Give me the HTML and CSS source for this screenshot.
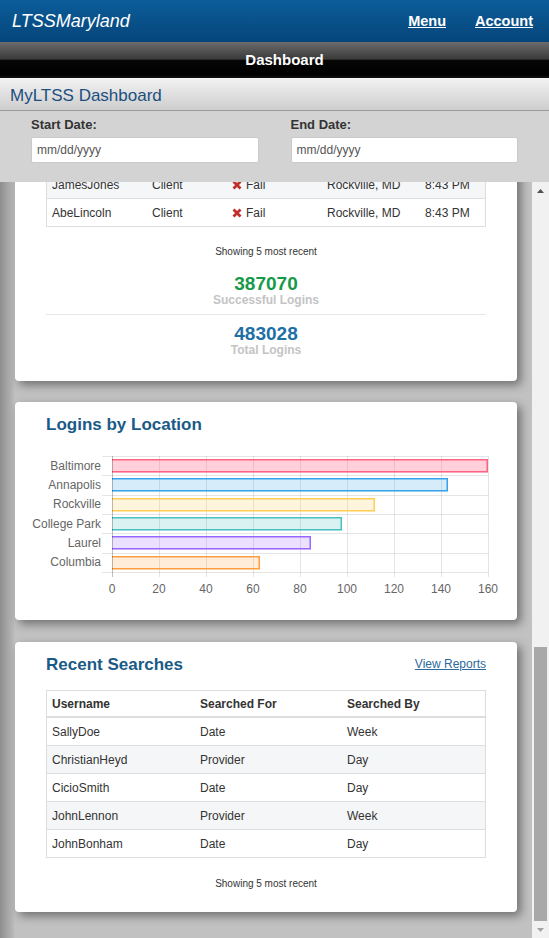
FILE: index.html
```html
<!DOCTYPE html>
<html lang="en">
<head>
<meta charset="utf-8">
<title>MyLTSS Dashboard</title>
<link rel="stylesheet" href="styles.css">
</head>
<body>
<header class="topbar">
  <div class="logo">LTSSMaryland</div>
  <nav class="nav"><a href="#">Menu</a><a href="#">Account</a></nav>
</header>
<div class="pagebar">Dashboard</div>
<div class="titlebar">MyLTSS Dashboard</div>
<div class="filters">
  <div class="field"><label>Start Date:</label><input type="text" placeholder="mm/dd/yyyy"></div>
  <div class="field"><label>End Date:</label><input type="text" placeholder="mm/dd/yyyy"></div>
</div>
<div class="workspace">
<main class="scroller">
  <div class="content">

    <section class="card">
      <div class="card-head"><h2>Login Summary</h2></div>
      <div class="summary">
        <div class="stat"><div class="stat-num green">387070</div><div class="stat-label">Successful Logins</div></div>
        <div class="stat"><div class="stat-num red">95958</div><div class="stat-label">Failed Logins</div></div>
        <div class="stat"><div class="stat-num blue">12408</div><div class="stat-label">Active Users</div></div>
        <div class="stat"><div class="stat-num blue">3120</div><div class="stat-label">New Users</div></div>
      </div>
    </section>

    <section class="card">
      <div class="card-head"><h2>Logins by User Type</h2></div>
      <table class="data">
        <thead><tr><th>Type</th><th>Logins</th><th>Share</th></tr></thead>
        <tbody>
          <tr><td>Client</td><td>201334</td><td>41.7%</td></tr>
          <tr><td>Provider</td><td>142876</td><td>29.6%</td></tr>
          <tr><td>Case Manager</td><td>78410</td><td>16.2%</td></tr>
          <tr><td>Supervisor</td><td>31205</td><td>6.5%</td></tr>
        </tbody>
      </table>
    </section>

    <section class="card card-stats">
      <div class="card-head"><h2>Recent Logins</h2><a class="link" href="#">View Reports</a></div>
      <table class="data">
        <colgroup><col class="w100"><col class="w80"><col class="w95"><col class="w98"><col></colgroup>
        <thead><tr><th>Username</th><th>Type</th><th>Status</th><th>Location</th><th>Time</th></tr></thead>
        <tbody>
          <tr><td>SallyDoe</td><td>Provider</td><td><svg class="ico" width="10" height="10" viewBox="0 0 10 10"><path class="ok" d="M1 5.5L4 8.5L9 1.5"/></svg>Success</td><td>Baltimore, MD</td><td>8:47 PM</td></tr>
          <tr><td>ChristianHeyd</td><td>Client</td><td><svg class="ico" width="10" height="10" viewBox="0 0 10 10"><path class="ok" d="M1 5.5L4 8.5L9 1.5"/></svg>Success</td><td>Annapolis, MD</td><td>8:46 PM</td></tr>
          <tr><td>CicioSmith</td><td>Provider</td><td><svg class="ico" width="10" height="10" viewBox="0 0 10 10"><path class="ok" d="M1 5.5L4 8.5L9 1.5"/></svg>Success</td><td>Laurel, MD</td><td>8:45 PM</td></tr>
          <tr><td>JamesJones</td><td>Client</td><td><svg class="ico" width="10" height="10" viewBox="0 0 10 10"><path class="fail" d="M1.5 1.5L8.5 8.5M8.5 1.5L1.5 8.5"/></svg>Fail</td><td>Rockville, MD</td><td>8:43 PM</td></tr>
          <tr><td>AbeLincoln</td><td>Client</td><td><svg class="ico" width="10" height="10" viewBox="0 0 10 10"><path class="fail" d="M1.5 1.5L8.5 8.5M8.5 1.5L1.5 8.5"/></svg>Fail</td><td>Rockville, MD</td><td>8:43 PM</td></tr>
        </tbody>
      </table>
      <p class="note">Showing 5 most recent</p>
      <div class="stat first"><div class="stat-num green">387070</div><div class="stat-label">Successful Logins</div></div>
      <hr class="divider">
      <div class="stat"><div class="stat-num blue">483028</div><div class="stat-label">Total Logins</div></div>
    </section>

    <section class="card">
      <div class="card-head"><h2>Logins by Location</h2></div>
      <svg class="chart" width="460" height="155" viewBox="0 0 460 155">
        <g class="grid">
          <line x1="56" y1="6.5" x2="442.5" y2="6.5"/>
          <line x1="56" y1="25.5" x2="442.5" y2="25.5"/>
          <line x1="56" y1="45.5" x2="442.5" y2="45.5"/>
          <line x1="56" y1="64.5" x2="442.5" y2="64.5"/>
          <line x1="56" y1="83.5" x2="442.5" y2="83.5"/>
          <line x1="56" y1="103.5" x2="442.5" y2="103.5"/>
          <line x1="56" y1="122.5" x2="442.5" y2="122.5"/>
          <line x1="113.5" y1="6" x2="113.5" y2="127"/>
          <line x1="160.5" y1="6" x2="160.5" y2="127"/>
          <line x1="207.5" y1="6" x2="207.5" y2="127"/>
          <line x1="254.5" y1="6" x2="254.5" y2="127"/>
          <line x1="301.5" y1="6" x2="301.5" y2="127"/>
          <line x1="348.5" y1="6" x2="348.5" y2="127"/>
          <line x1="395.5" y1="6" x2="395.5" y2="127"/>
          <line x1="442.5" y1="6" x2="442.5" y2="127"/>
        </g>
        <g class="bars">
          <rect class="b-red" x="66" y="9" width="376" height="13.5"/>
          <path class="s-red" d="M66 9.75H441.25V21.75H66"/>
          <rect class="b-blue" x="66" y="28" width="336" height="13.5"/>
          <path class="s-blue" d="M66 28.75H401.25V40.75H66"/>
          <rect class="b-yellow" x="66" y="48" width="263" height="13.5"/>
          <path class="s-yellow" d="M66 48.75H328.25V60.75H66"/>
          <rect class="b-teal" x="66" y="67" width="230" height="13.5"/>
          <path class="s-teal" d="M66 67.75H295.25V79.75H66"/>
          <rect class="b-purple" x="66" y="86" width="199" height="13.5"/>
          <path class="s-purple" d="M66 86.75H264.25V98.75H66"/>
          <rect class="b-orange" x="66" y="106" width="148" height="13.5"/>
          <path class="s-orange" d="M66 106.75H213.25V118.75H66"/>
        </g>
        <line class="axis" x1="66.5" y1="6" x2="66.5" y2="127"/>
        <g class="ticks">
          <text x="55" y="19.5" text-anchor="end">Baltimore</text>
          <text x="55" y="38.5" text-anchor="end">Annapolis</text>
          <text x="55" y="58" text-anchor="end">Rockville</text>
          <text x="55" y="77.5" text-anchor="end">College Park</text>
          <text x="55" y="96.5" text-anchor="end">Laurel</text>
          <text x="55" y="116" text-anchor="end">Columbia</text>
          <text x="66" y="143" text-anchor="middle">0</text>
          <text x="113" y="143" text-anchor="middle">20</text>
          <text x="160" y="143" text-anchor="middle">40</text>
          <text x="207" y="143" text-anchor="middle">60</text>
          <text x="254" y="143" text-anchor="middle">80</text>
          <text x="301" y="143" text-anchor="middle">100</text>
          <text x="348" y="143" text-anchor="middle">120</text>
          <text x="395" y="143" text-anchor="middle">140</text>
          <text x="442" y="143" text-anchor="middle">160</text>
        </g>
      </svg>
    </section>

    <section class="card card-searches">
      <div class="card-head"><h2>Recent Searches</h2><a class="link" href="#">View Reports</a></div>
      <table class="data">
        <colgroup><col class="w148"><col class="w147"><col></colgroup>
        <thead><tr><th>Username</th><th>Searched For</th><th>Searched By</th></tr></thead>
        <tbody>
          <tr><td>SallyDoe</td><td>Date</td><td>Week</td></tr>
          <tr><td>ChristianHeyd</td><td>Provider</td><td>Day</td></tr>
          <tr><td>CicioSmith</td><td>Date</td><td>Day</td></tr>
          <tr><td>JohnLennon</td><td>Provider</td><td>Week</td></tr>
          <tr><td>JohnBonham</td><td>Date</td><td>Day</td></tr>
        </tbody>
      </table>
      <p class="note note-last">Showing 5 most recent</p>
    </section>

  </div>
</main>
<div class="scrollbar" aria-hidden="true">
  <div class="sb-btn"><svg width="7" height="4" viewBox="0 0 7 4"><path class="sb-up" d="M0 4L3.5 0L7 4z"/></svg></div>
  <div class="sb-track"><div class="sb-thumb"></div></div>
  <div class="sb-btn"><svg width="7" height="4" viewBox="0 0 7 4"><path class="sb-down" d="M0 0L7 0L3.5 4z"/></svg></div>
</div>
</div>
</body>
</html>
```
FILE: styles.css
```css
* { box-sizing: border-box; }
html, body { height: 100%; }
body {
  margin: 0;
  height: 100vh;
  overflow: hidden;
  display: flex;
  flex-direction: column;
  font-family: "Liberation Sans", Arial, sans-serif;
  color: #333;
}

/* top header */
.topbar {
  height: 42px;
  flex: none;
  display: flex;
  align-items: center;
  padding: 0 16px 0 12px;
  background: linear-gradient(#0c5d9a, #05457a);
}
.logo { flex: 1; color: #fff; font-style: italic; font-size: 18px; }
.nav { display: flex; gap: 29px; }
.nav a { color: #fff; font-weight: bold; font-size: 14.5px; text-decoration: underline; }

.pagebar {
  height: 36px;
  flex: none;
  display: flex;
  align-items: center;
  justify-content: center;
  padding: 0 0 2px 20px;
  color: #fff;
  font-weight: bold;
  font-size: 15px;
  background: linear-gradient(#6c6c6c 0%, #3a3a3a 48%, #060606 50%, #000 90%, #111 100%);
}

.titlebar {
  height: 33px;
  flex: none;
  display: flex;
  align-items: center;
  padding: 3px 0 0 10px;
  font-size: 17px;
  color: #1c4f80;
  background: linear-gradient(#f3f3f3, #cdcdcd);
  border-bottom: 1px solid #9b9b9b;
}

.filters {
  flex: none;
  display: grid;
  grid-template-columns: 1fr 1fr;
  gap: 32px;
  padding: 6px 31px 19px;
  background: #d3d3d3;
}
.field label {
  display: block;
  font-weight: bold;
  font-size: 13px;
  line-height: 16px;
  margin-bottom: 4px;
  color: #333;
}
.field input {
  display: block;
  width: 100%;
  height: 26px;
  border: 1px solid #cacaca;
  border-radius: 2px;
  padding: 0 5px;
  background: #fff;
  font: 12px "Liberation Sans", Arial, sans-serif;
  color: #555;
}
.field input::placeholder { color: #555; }

/* scrolling area */
.workspace {
  flex: 1;
  min-height: 0;
  display: flex;
}
.scroller {
  flex: 1;
  min-width: 0;
  overflow: hidden;
  display: flex;
  flex-direction: column-reverse;
  background: linear-gradient(90deg, #8d8d8d 0, #b4b4b4 12px, #c1c1c1 15px);
}

.scrollbar {
  width: 17px;
  flex: none;
  display: flex;
  flex-direction: column;
  background: #f1f1f1;
}
.sb-btn {
  height: 17px;
  flex: none;
  display: flex;
  align-items: center;
  justify-content: center;
}
.sb-btn svg { display: block; }
.sb-up { fill: #505050; }
.sb-down { fill: #a3a3a3; }
.sb-track {
  flex: 1;
  display: flex;
  flex-direction: column;
  justify-content: flex-end;
  padding: 0 2px;
}
.sb-thumb { height: 274px; background: #a8a8a8; }

.content {
  display: flex;
  flex-direction: column;
  gap: 21px;
  padding: 15px 15px 26px;
}

.card {
  background: #fff;
  border-radius: 4px;
  box-shadow: 4px 4px 10px rgba(0, 0, 0, 0.42);
  padding: 14px 31px 15px;
}
.card-stats { padding-bottom: 25px; }
.card-searches { padding-bottom: 22px; margin-top: 1px; }

.card-head {
  display: flex;
  justify-content: space-between;
  align-items: center;
  height: 18px;
  margin-bottom: 16px;
}
.card-head h2 {
  margin: 0;
  font-size: 17px;
  line-height: 18px;
  font-weight: bold;
  color: #1a5a87;
}
.link { font-size: 12px; color: #2d6a9c; text-decoration: underline; margin-top: -3px; }

/* tables */
.data {
  width: 100%;
  table-layout: fixed;
  border-collapse: separate;
  border-spacing: 0;
  border: 1px solid #ddd;
  border-bottom: none;
  font-size: 12px;
  color: #333;
}
.data th, .data td {
  box-sizing: content-box;
  padding: 0 6px 0 5px;
  text-align: left;
  vertical-align: middle;
  white-space: nowrap;
  line-height: 14px;
}
.data th { height: 25px; font-weight: bold; border-bottom: 2px solid #ddd; }
.data td { height: 27px; border-bottom: 1px solid #ddd; }
.data tbody tr:nth-child(even) td { background: #f5f6f7; }
.w100 { width: 100px; }
.w80 { width: 80px; }
.w95 { width: 95px; }
.w98 { width: 98px; }
.w148 { width: 148px; }
.w147 { width: 147px; }

.ico { display: inline-block; vertical-align: -1px; margin-right: 4px; }
.ico .fail { stroke: #c0302b; stroke-width: 2.8; fill: none; }
.ico .ok { stroke: #1b9a4c; stroke-width: 2.2; fill: none; }

.note {
  margin: 19px 0 0;
  text-align: center;
  font-size: 10px;
  line-height: 12px;
  color: #333;
}
.note-last { margin-top: 20px; }

.stat { text-align: center; }
.stat.first { margin-top: 16px; }
.stat-num { font-size: 19px; font-weight: bold; line-height: 20px; }
.stat-label { font-size: 12px; font-weight: bold; line-height: 12px; color: #c4c4c4; }
.green { color: #17994a; }
.blue { color: #1d6fa5; }
.red { color: #c0302b; }
.divider { border: 0; border-top: 1px solid #e6e6e6; margin: 8px 0 9px; height: 0; }

.summary {
  display: grid;
  grid-template-columns: 1fr 1fr;
  grid-auto-rows: 56px;
  gap: 12px;
}
.summary .stat { padding-top: 12px; border: 1px solid #eee; border-radius: 3px; }

/* charts */
.chart { display: block; overflow: visible; font-family: "Liberation Sans", Arial, sans-serif; }
.grid line { stroke: rgba(0, 0, 0, 0.1); stroke-width: 1; }
.chart .axis { stroke: rgba(0, 0, 0, 0.25); stroke-width: 1; }
.ticks text { font-size: 12px; fill: #666; }
.bars path { fill: none; stroke-width: 1.5; }
.b-red { fill: rgba(255, 99, 132, 0.3); }
.s-red { stroke: rgb(255, 99, 132); }
.b-blue { fill: rgba(54, 162, 235, 0.2); }
.s-blue { stroke: rgb(54, 162, 235); }
.b-yellow { fill: rgba(255, 206, 86, 0.2); }
.s-yellow { stroke: rgb(255, 206, 86); }
.b-teal { fill: rgba(75, 192, 192, 0.2); }
.s-teal { stroke: rgb(75, 192, 192); }
.b-purple { fill: rgba(153, 102, 255, 0.2); }
.s-purple { stroke: rgb(153, 102, 255); }
.b-orange { fill: rgba(255, 159, 64, 0.2); }
.s-orange { stroke: rgb(255, 159, 64); }
```
